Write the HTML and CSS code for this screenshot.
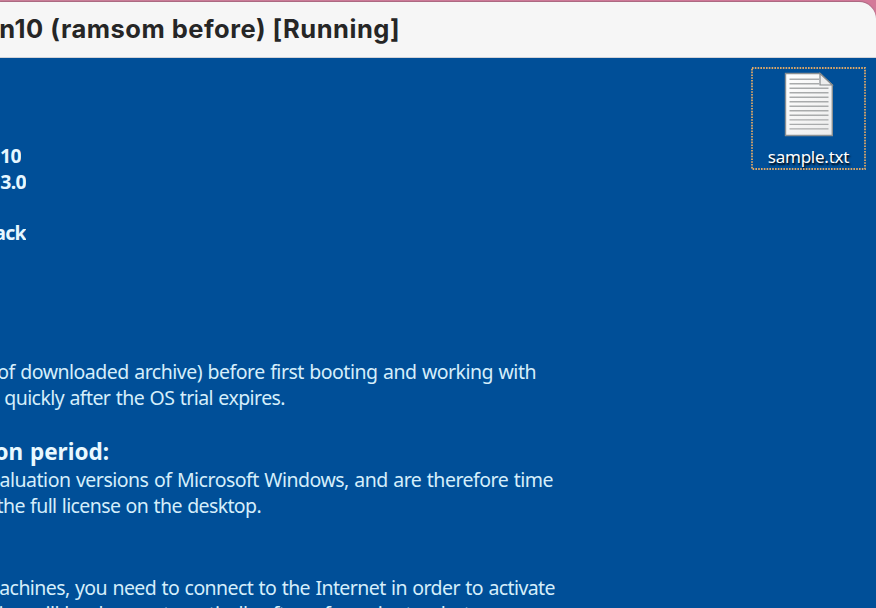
FILE: index.html
```
<!DOCTYPE html>
<html lang="en">
<head>
<meta charset="utf-8">
<title>Win10 (ramsom before) [Running]</title>
<link rel="stylesheet" href="styles.css">
</head>
<body>
<main class="window">
  <header class="titlebar"><h1 class="title"><span>n10 (ramsom before) [Running]</span></h1></header>
  <section class="desktop">
    <div class="wallpaper">
      <div class="facts">
        <p class="line fact ten"><span>10</span></p>
        <p class="line fact version"><span>3.0</span></p>
        <p class="line fact pack"><span>ack</span></p>
      </div>
      <div class="notes">
        <p class="line l1"><span>of downloaded archive) before first booting and working with</span></p>
        <p class="line l2"><span>quickly after the OS trial expires.</span></p>
        <h2 class="line heading"><span>on period:</span></h2>
        <p class="line l3"><span>aluation versions of Microsoft Windows, and are therefore time</span></p>
        <p class="line l4"><span>the full license on the desktop.</span></p>
        <p class="line l5"><span>achines, you need to connect to the Internet in order to activate</span></p>
        <p class="line l6"><span>ion will be done automatically after a few minutes, but</span></p>
      </div>
    </div>
    <div class="file">
      <svg class="frame" width="115" height="103" viewBox="0 0 115 103"><rect x="1" y="1" width="113" height="101"/></svg>
      <svg class="doc" width="50" height="65" viewBox="0 0 50 65">
        <defs><linearGradient id="paper" x2="1" y2="1"><stop stop-color="#fff"/><stop offset="1" stop-color="#ececec"/></linearGradient></defs>
        <path d="M1.5 1.5H36L48.300 13V63.500H1.500Z" fill="url(#paper)" stroke="#8b9092" stroke-width="1.4"/>
        <path d="M5.500 7.200H35M5.500 11.700H35M5.500 16.200H44.500M5.500 20.700H44.500M5.500 25.300H44.500M5.500 29.800H44.500M5.500 34.300H44.500M5.500 38.800H44.500M5.500 43.300H44.500M5.500 47.900H44.500M5.500 52.400H44.500M5.500 56.900H44.500" stroke="#a9abac" stroke-width="1.400"/>
        <path d="M36 1.500V13H48.300Z" fill="#ededed" stroke="#85898b" stroke-width="1.200"/>
      </svg>
      <p class="filename">sample.txt</p>
    </div>
  </section>
</main>
</body>
</html>
```
FILE: styles.css
```
* { box-sizing: border-box; }
body { margin: 0; width: 876px; height: 608px; overflow: hidden; background: linear-gradient(90deg, #cc8199, #d47999); font-family: "Noto Sans", sans-serif; }
h1, h2, p { margin: 0; }
.window { height: 608px; padding-top: 2px; }
.titlebar { height: 56px; background: #f6f6f6; border-bottom: 1px solid #d2d3d8; border-top-right-radius: 17px; box-shadow: 0 -1px 1px #a96880; }
.title { display: flex; justify-content: flex-end; width: 400px; overflow: hidden; font: 700 25.500px/54px Inter, sans-serif; letter-spacing: 0.500px; color: #262626; white-space: nowrap; }
.desktop { display: flex; justify-content: space-between; height: 550px; background: #004f98; overflow: hidden; }
.wallpaper { width: 560px; }
.line { display: flex; justify-content: flex-end; overflow: hidden; height: 26px; font-size: 19.500px; line-height: 26px; letter-spacing: -0.500px; word-spacing: 0.900px; color: #d5eefb; white-space: nowrap; }
.facts { padding-top: 85px; }
.fact { font-weight: 700; letter-spacing: -0.700px; color: #e6f7ff; }
.ten { width: 21px; }
.version { width: 26px; }
.pack { width: 26px; margin-top: 25px; }
.notes { padding-top: 113px; }
.l1 { width: 536px; }
.l2 { width: 285px; letter-spacing: -0.570px; }
.heading { width: 109px; height: 31px; margin-top: 25px; font-size: 22.500px; line-height: 32px; letter-spacing: 0; color: #e9f9ff; }
.l3 { width: 553px; }
.l4 { width: 261px; letter-spacing: -0.620px; }
.l5 { width: 555px; margin-top: 56px; letter-spacing: -0.580px; }
.l6 { width: 470px; letter-spacing: -0.600px; }
.file { position: relative; display: flex; flex-direction: column; align-items: center; width: 115px; height: 103px; margin: 9px 10px 0 0; padding-top: 5px; }
.frame { position: absolute; inset: 0; fill: none; stroke: #dca768; stroke-width: 1.800; stroke-dasharray: 1.600 1.200; }
.filename { margin-top: 7px; font-size: 17px; line-height: 25px; letter-spacing: -0.250px; color: #fff; text-shadow: 1px 2px 2px #000; }
```
